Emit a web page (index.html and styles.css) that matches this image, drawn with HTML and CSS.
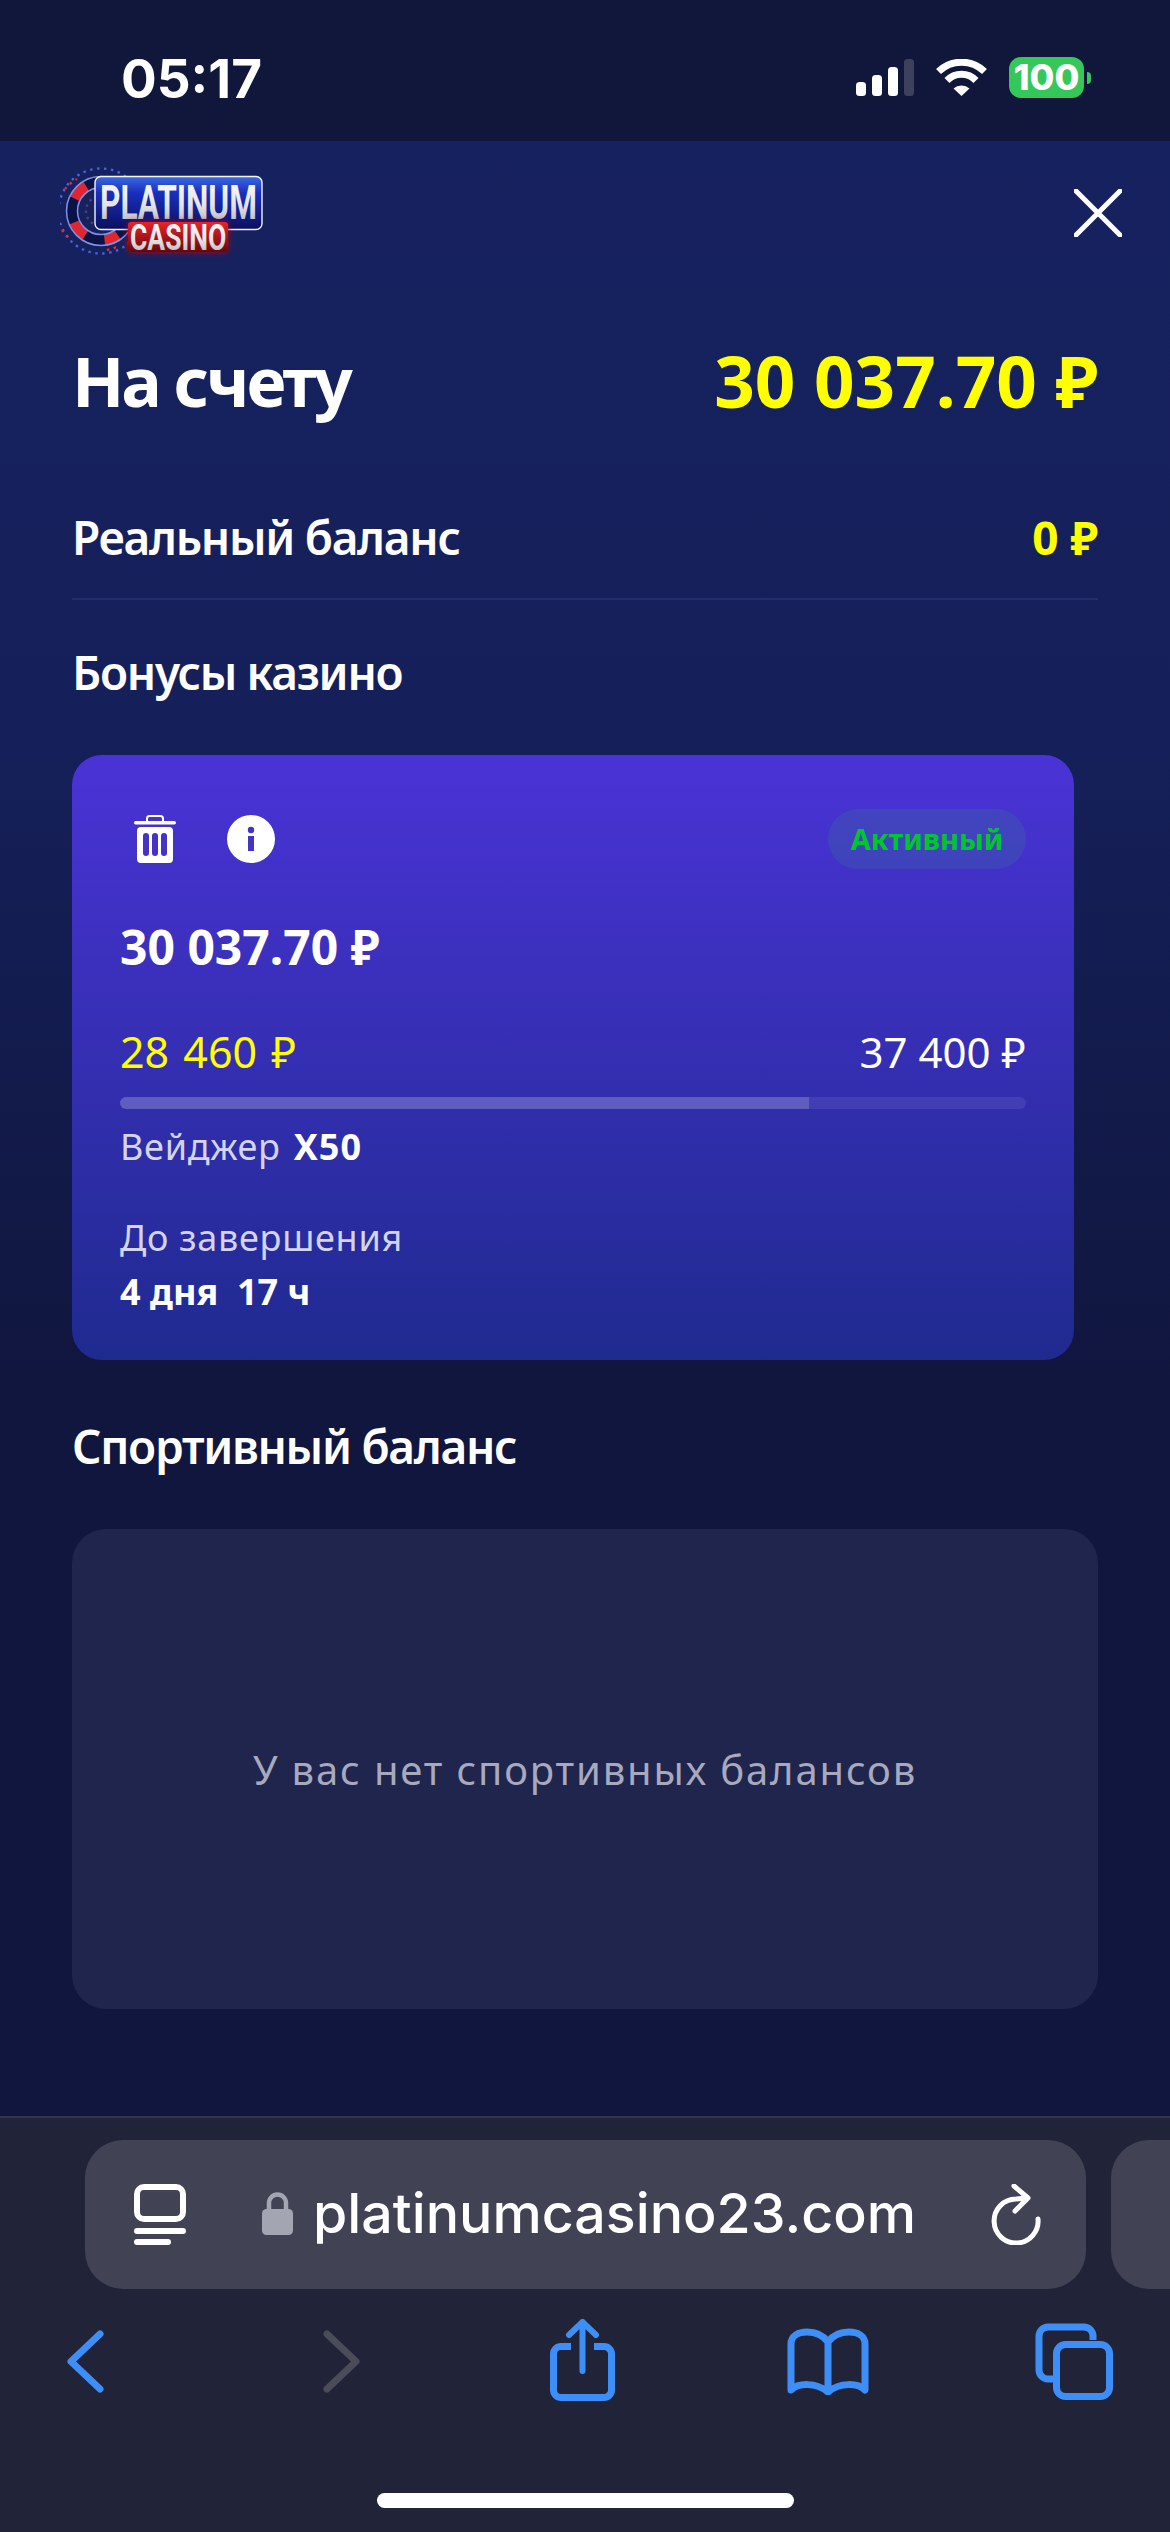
FILE: index.html
```html
<!DOCTYPE html>
<html lang="ru">
<head>
<meta charset="utf-8">
<title>Platinum Casino</title>
<link rel="stylesheet" href="styles.css">
</head>
<body>
<div class="status">
  <span class="time">05:17</span>
  <div class="status-icons">
    <svg class="signal" viewBox="0 0 58 37"><rect y="23" width="10" height="14" rx="3.5" fill="#fff"/><rect x="16" y="16" width="10" height="21" rx="3.5" fill="#fff"/><rect x="32" y="8" width="10" height="29" rx="3.5" fill="#fff"/><rect x="48" width="10" height="37" rx="3.5" fill="#3e415e"/></svg>
    <svg class="wifi" viewBox="0 0 51 37"><path d="M2.5 12.5A33 33 0 0 1 48.500 12.500M11 21.500A20 20 0 0 1 40 21.500" fill="none" stroke="#fff" stroke-width="7"/><path d="M17.500 29.500A12 12 0 0 1 33.500 29.500L25.500 37Z" fill="#fff"/></svg>
    <div class="battery"><span class="battery-body">100</span><i class="battery-nub"></i></div>
  </div>
</div>

<main class="modal">
  <header class="modal-head">
    <svg class="logo" viewBox="0 0 210 100">
      <defs>
        <linearGradient id="plate" x1="0" y1="0" x2="0" y2="1"><stop offset="0" stop-color="#3a6be0"/><stop offset=".3" stop-color="#1a2fc0"/><stop offset="1" stop-color="#0a0f5c"/></linearGradient>
        <linearGradient id="silver" x1="0" y1="0" x2="0" y2="1"><stop offset="0" stop-color="#ffffff"/><stop offset=".55" stop-color="#e4e4e8"/><stop offset="1" stop-color="#a4a6b0"/></linearGradient>
        <linearGradient id="redbox" x1="0" y1="0" x2="0" y2="1"><stop offset="0" stop-color="#e8242c"/><stop offset="1" stop-color="#6a0508"/></linearGradient>
        <filter id="glow" x="-20%" y="-30%" width="140%" height="160%"><feGaussianBlur stdDeviation="3"/></filter>
      </defs>
      <circle cx="41" cy="51" r="42.500" fill="none" stroke="#4d63dd" stroke-width="2.400" stroke-dasharray="2.400 4.600"/>
      <path d="M5 29A42.500 42.500 0 0 1 17 19M2 70A42.500 42.500 0 0 0 12 80M47 90A42.500 42.500 0 0 0 60 85" fill="none" stroke="#e22a35" stroke-width="2.400" stroke-dasharray="2.400 4.600"/>
      <circle cx="41" cy="51" r="29" fill="none" stroke="#0b1248" stroke-width="11"/>
      <path d="M14.700 38.700A29 29 0 0 1 26.100 26.100M25.200 75.300A29 29 0 0 1 14.300 62.300M57.600 74.800A29 29 0 0 1 44.500 79.800" stroke="#e02630" stroke-width="11" fill="none"/>
      <circle cx="41" cy="51" r="34.500" fill="none" stroke="#7f92e8" stroke-width="1.500"/>
      <circle cx="41" cy="51" r="23.500" fill="none" stroke="#7f92e8" stroke-width="1.500"/>
      <circle cx="41" cy="51" r="15" fill="none" stroke="#5a3a78" stroke-width="2.400" stroke-dasharray="2.400 4"/>
      <rect x="35" y="16.500" width="167" height="53" rx="6" fill="url(#plate)" stroke="#f2f4ff" stroke-width="1.400"/>
      <text class="logo-top" transform="translate(40 59) scale(.646 1)" fill="url(#silver)">PLATINUM</text>
      <rect x="68" y="62" width="100" height="30" rx="4" fill="#b30a12" filter="url(#glow)"/>
      <rect x="68" y="62" width="100" height="30" rx="3" fill="url(#redbox)"/>
      <text class="logo-sub" transform="translate(70 90) scale(.737 1)" fill="url(#silver)">CASINO</text>
    </svg>
    <svg class="close" viewBox="0 0 48 48"><path d="M2 2L46 46M46 2L2 46" stroke="#fff" stroke-width="5" stroke-linecap="round"/></svg>
  </header>

  <section class="total">
    <h1 class="total-title">На счету</h1>
    <span class="total-sum">30 037.70 ₽</span>
  </section>

  <section class="real">
    <h2 class="heading">Реальный баланс</h2>
    <span class="real-sum">0 ₽</span>
  </section>

  <h2 class="heading casino-title">Бонусы казино</h2>

  <article class="card">
    <div class="card-top">
      <div class="card-actions">
        <svg class="trash" viewBox="0 0 42 48"><rect y="6" width="42" height="3.500" rx="1.700" fill="#fff"/><rect x="13" y="1" width="16" height="7" rx="2.500" fill="none" stroke="#fff" stroke-width="2"/><rect x="3" y="12" width="36" height="36" rx="4" fill="#fff"/><rect x="9" y="18" width="6" height="23" rx="3" fill="#4433c6"/><rect x="18" y="18" width="6" height="23" rx="3" fill="#4433c6"/><rect x="27" y="18" width="6" height="23" rx="3" fill="#4433c6"/></svg>
        <svg class="info" viewBox="0 0 48 48"><circle cx="24" cy="24" r="24" fill="#fff"/><circle cx="24" cy="15" r="3.200" fill="#4433c6"/><rect x="21" y="21" width="6" height="15" fill="#4433c6"/></svg>
      </div>
      <span class="badge">Активный</span>
    </div>
    <div class="card-sum">30 037.70 ₽</div>
    <div class="wager-values">
      <span class="wager-now">28 460 ₽</span>
      <span class="wager-max">37 400 ₽</span>
    </div>
    <div class="progress"><div class="progress-fill" style="width:76%"></div></div>
    <div class="wager-label">Вейджер <b>X50</b></div>
    <div class="until-label">До завершения</div>
    <div class="until-value">4 дня&nbsp; 17 ч</div>
  </article>

  <h2 class="heading sport-title">Спортивный баланс</h2>

  <div class="empty">У вас нет спортивных балансов</div>
</main>

<footer class="toolbar">
  <div class="address-row">
    <div class="address">
      <svg class="reader" viewBox="0 0 52 61"><rect x="3" y="3" width="46" height="32" rx="7" fill="none" stroke="#fff" stroke-width="6"/><path d="M3 47H49M3 58H34" stroke="#fff" stroke-width="6" stroke-linecap="round"/></svg>
      <svg class="lock" viewBox="0 0 31 44"><path d="M7 21V12a8.500 8.500 0 0 1 17 0V21" fill="none" stroke="#a4a5b2" stroke-width="4.500"/><rect y="18" width="31" height="26" rx="4.500" fill="#a4a5b2"/></svg>
      <span class="url">platinumcasino23.com</span>
      <svg class="reload" viewBox="0 0 50 61"><path d="M47 35A22 22 0 1 1 25 15L36 14M23 2L37 14L24 27" fill="none" stroke="#fff" stroke-width="5" stroke-linecap="round" stroke-linejoin="round"/></svg>
    </div>
    <div class="next-tab"></div>
  </div>
  <nav class="nav">
    <svg class="chev" viewBox="0 0 37 63"><path d="M33 4L4 31.500L33 59" fill="none" stroke="#3e8ef7" stroke-width="7" stroke-linecap="round" stroke-linejoin="round"/></svg>
    <svg class="chev forward" viewBox="0 0 37 63"><path d="M4 4L33 31.500L4 59" fill="none" stroke="#4a4c5a" stroke-width="7" stroke-linecap="round" stroke-linejoin="round"/></svg>
    <svg class="share" viewBox="0 0 65 82"><path d="M21 27.500H11a7.500 7.500 0 0 0-7.500 7.500V71a7.500 7.500 0 0 0 7.500 7.500H54a7.500 7.500 0 0 0 7.500-7.500V35a7.500 7.500 0 0 0-7.500-7.500H44" fill="none" stroke="#3e8ef7" stroke-width="7"/><path d="M32.500 3V52M19 16L32.500 3L46 16" fill="none" stroke="#3e8ef7" stroke-width="6" stroke-linecap="round" stroke-linejoin="round"/></svg>
    <svg class="book" viewBox="0 0 82 67"><path d="M41 14C36 7 29 4 20 4C11 4 4 8 4 16V62C11 55 29 54 41 64C53 54 71 55 78 62V16C78 8 71 4 62 4C53 4 46 7 41 14V62" fill="none" stroke="#3e8ef7" stroke-width="7" stroke-linejoin="round" stroke-linecap="round"/></svg>
    <svg class="tabs" viewBox="0 0 78 77"><path d="M58 17V13a9 9 0 0 0-9-9H13a9 9 0 0 0-9 9V47a9 9 0 0 0 9 9H18" fill="none" stroke="#3e8ef7" stroke-width="7"/><rect x="21.500" y="21.500" width="53" height="52" rx="9" fill="none" stroke="#3e8ef7" stroke-width="7"/></svg>
  </nav>
  <div class="home-bar"></div>
</footer>
</body>
</html>
```
FILE: styles.css
```css
* { box-sizing: border-box; }
html, body { margin: 0; padding: 0; }
body {
  width: 1170px;
  height: 2532px;
  overflow: hidden;
  display: flex;
  flex-direction: column;
  background: #11163b;
  font-family: "Noto Sans", "Open Sans", sans-serif;
  color: #fff;
}
h1, h2 { margin: 0; }
svg { display: block; flex: none; }

/* status bar */
.status {
  height: 141px;
  flex: none;
  display: flex;
  align-items: flex-start;
  justify-content: space-between;
  padding: 0 79px 0 121px;
  background: #11163b;
}
.time {
  font-family: Inter, sans-serif;
  font-weight: 700;
  font-size: 53px;
  line-height: 50px;
  margin-top: 54px;
}
.status-icons {
  display: flex;
  align-items: flex-start;
  margin-top: 57px;
}
.signal { width: 58px; height: 37px; margin: 2px 22px 0 0; }
.wifi { width: 51px; height: 37px; margin: 2px 22px 0 0; }
.battery { display: flex; align-items: center; }
.battery-body {
  width: 75px;
  height: 41px;
  border-radius: 12px;
  background: #34c759;
  font-family: Inter, sans-serif;
  font-weight: 800;
  font-size: 36px;
  line-height: 41px;
  text-align: center;
}
.battery-nub {
  width: 4px;
  height: 12px;
  margin-left: 3px;
  background: #34c759;
  border-radius: 0 6px 6px 0;
}

/* modal */
.modal {
  flex: 1;
  min-height: 0;
  padding: 0 72px;
  background: linear-gradient(180deg, #16225f 0%, #15205a 30%, #10163e 63%, #10163e 100%);
}
.modal-head {
  display: flex;
  justify-content: space-between;
  align-items: flex-start;
  margin: 0 -24px 0 -12px;
  padding-top: 19px;
  height: 183px;
}
.logo { width: 210px; height: 100px; }
.logo-top { font-family: "Roboto", sans-serif; font-weight: 700; font-size: 49px; }
.logo-sub { font-family: "Roboto", sans-serif; font-weight: 700; font-size: 36px; }
.close { width: 48px; height: 48px; margin-top: 29px; }

.total {
  display: flex;
  justify-content: space-between;
  align-items: center;
  height: 112px;
}
.total-title { font-size: 68px; font-weight: 700; letter-spacing: -3px; line-height: 90px; margin-top: 2px; }
.total-sum { font-size: 71px; font-weight: 700; color: #ffff00; line-height: 90px; margin-top: 2px; }

.real {
  display: flex;
  justify-content: space-between;
  align-items: center;
  height: 164px;
  padding-top: 71px;
  padding-bottom: 31px;
  border-bottom: 2px solid #242e6c;
}
.heading { font-size: 46px; font-weight: 600; letter-spacing: -1.300px; line-height: 60px; }
.real-sum { font-size: 46px; font-weight: 700; color: #ffff00; }

.casino-title { margin-top: 42px; }

/* bonus card */
.card {
  width: 1002px;
  height: 605px;
  margin-top: 53px;
  padding: 54px 48px 0 48px;
  border-radius: 30px;
  background: linear-gradient(180deg, #4a33d6 0%, #1f2a8f 100%);
}
.card-top {
  display: flex;
  justify-content: space-between;
  align-items: center;
  height: 60px;
}
.card-actions { display: flex; align-items: center; gap: 51px; padding-left: 14px; }
.trash, .info { height: 48px; }
.trash { width: 42px; }
.info { width: 48px; }
.badge {
  width: 198px;
  height: 60px;
  border-radius: 30px;
  background: rgba(60, 90, 170, .45);
  color: #00c62e;
  font-size: 29px;
  font-weight: 700;
  line-height: 60px;
  text-align: center;
}
.card-sum { font-size: 48px; font-weight: 700; line-height: 64px; margin-top: 46px; }
.wager-values {
  display: flex;
  justify-content: space-between;
  font-size: 43px;
  line-height: 56px;
  margin-top: 45px;
}
.wager-now { color: #ffff00; word-spacing: 3px; }
.wager-max { font-size: 42px; }
.progress {
  height: 12px;
  border-radius: 6px;
  margin-top: 17px;
  background: rgba(255, 255, 255, .08);
  overflow: hidden;
}
.progress-fill { height: 100%; background: rgba(255, 255, 255, .16); }
.wager-label, .until-label { font-size: 36px; line-height: 48px; color: #d4d4ee; letter-spacing: .7px; }
.wager-label { margin-top: 14px; }
.wager-label b { color: #fff; font-weight: 700; letter-spacing: 1px; margin-left: 3px; }
.until-label { margin-top: 43px; }
.until-value { font-size: 36px; font-weight: 700; line-height: 46px; margin-top: 7px; }

.sport-title { margin-top: 56px; }
.empty {
  display: flex;
  align-items: center;
  justify-content: center;
  height: 480px;
  margin-top: 53px;
  border-radius: 34px;
  background: #1f254c;
  color: #a7a9bf;
  font-size: 40px;
  letter-spacing: 1.850px;
}

/* browser toolbar */
.toolbar {
  height: 416px;
  flex: none;
  background: #212438;
  border-top: 2px solid #33364a;
}
.address-row {
  display: flex;
  gap: 25px;
  padding: 22px 0 0 85px;
  overflow: hidden;
}
.address {
  width: 1001px;
  height: 149px;
  flex: none;
  display: flex;
  align-items: center;
  padding: 0 45px 0 49px;
  border-radius: 38px;
  background: #414355;
}
.reader { width: 52px; height: 61px; }
.lock { width: 31px; height: 44px; margin-left: 76px; margin-top: -4px; }
.url {
  font-family: Inter, sans-serif;
  font-size: 55.500px;
  line-height: 60px;
  font-weight: 500;
  margin: -4px auto 0 20px;
  white-space: nowrap;
}
.reload { width: 50px; height: 61px; }
.next-tab {
  width: 200px;
  height: 149px;
  flex: none;
  border-radius: 38px 0 0 38px;
  background: #414355;
}
.nav {
  position: relative;
  height: 120px;
  margin-top: 21px;
}
.nav svg { position: absolute; }
.chev { width: 37px; height: 63px; left: 67px; top: 20px; }
.chev.forward { left: 323px; }
.share { width: 65px; height: 82px; left: 550px; top: 9px; }
.book { width: 82px; height: 67px; left: 787px; top: 18px; }
.tabs { width: 78px; height: 77px; left: 1035px; top: 13px; }
.home-bar {
  width: 417px;
  height: 15px;
  margin: 63px 0 0 377px;
  border-radius: 8px;
  background: #fff;
}
```
